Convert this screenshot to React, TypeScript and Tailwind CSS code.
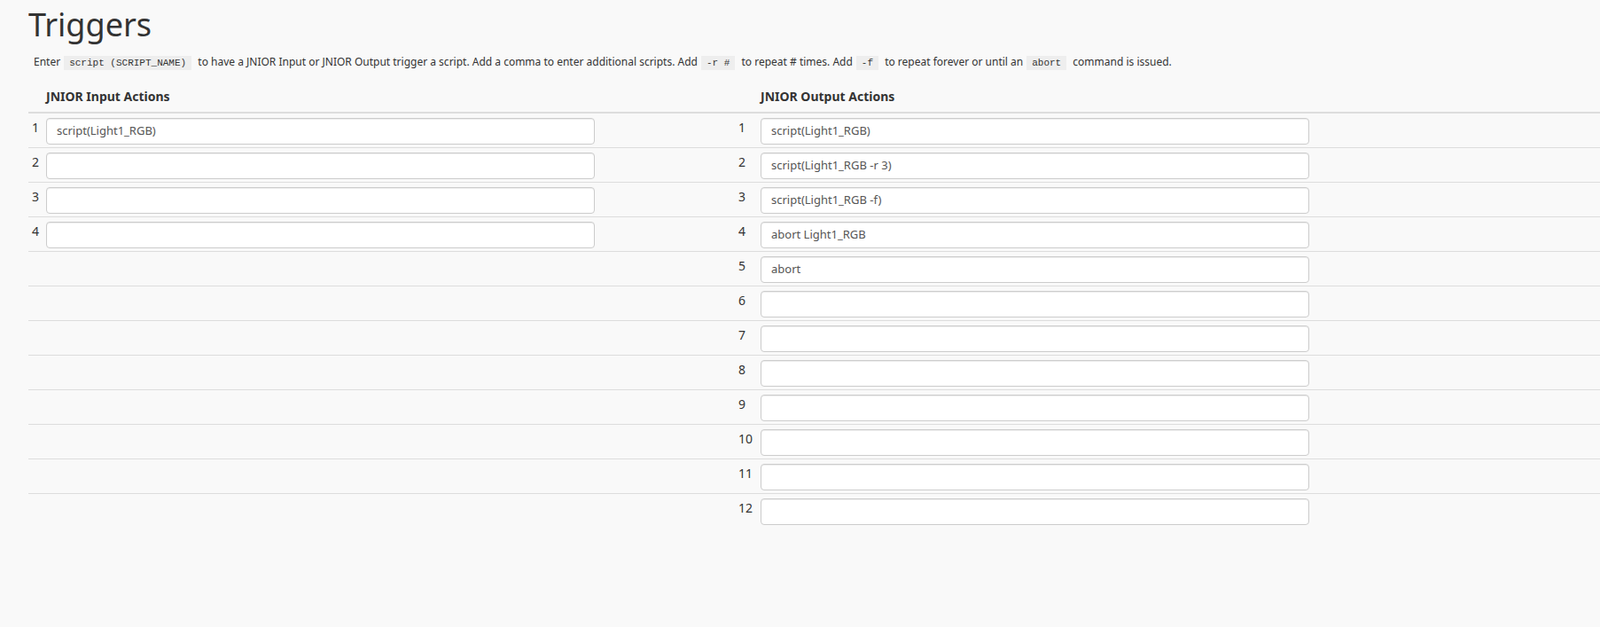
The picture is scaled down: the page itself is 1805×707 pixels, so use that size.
import React from "react";

const inputs = ["script(Light1_RGB)", "", "", ""];
const outputs = ["script(Light1_RGB)", "script(Light1_RGB -r 3)", "script(Light1_RGB -f)", "abort Light1_RGB", "abort", "", "", "", "", "", "", ""];

function Code({ children }: { children: React.ReactNode }) {
  return <code className="bg-[#eeeeee] px-[6px] py-[2px] mx-[4px] font-['Liberation_Mono'] text-[11px] text-[#333]">{children}</code>;
}

function Field({ v }: { v: string }) {
  return (
    <div className="w-[619px] h-[30px] bg-white border border-[#cccccc] rounded-[4px] shadow-[inset_0_1px_1px_rgba(0,0,0,0.075)] px-[11px] flex items-center text-[13px] text-[#555]">
      {v}
    </div>
  );
}

export default function App() {
  return (
    <div className="min-h-[707px] bg-[#f9f9f9] font-['Liberation_Sans'] text-[#333] pl-[32px]">
      <h1 className="text-[36px] leading-none pt-[10px]">Triggers</h1>
      <p className="text-[12px] mt-[15px] pl-[6px]">
        Enter<Code>script (SCRIPT_NAME)</Code> to have a JNIOR Input or JNIOR Output trigger a script. Add a comma to enter additional scripts. Add<Code>-r #</Code> to repeat # times. Add<Code>-f</Code> to repeat forever or until an<Code>abort</Code> command is issued.
      </p>
      <div className="mt-[18px]">
        <div className="flex h-[30px] border-b-2 border-[#dddddd] text-[14px] font-bold items-start">
          <div className="w-[798px] pl-[20px]">JNIOR Input Actions</div>
          <div className="pl-[28px]">JNIOR Output Actions</div>
        </div>
        {outputs.map((o, i) => (
          <div key={i} className={`flex h-[39px] ${i < outputs.length - 1 ? "border-b border-[#dddddd]" : ""}`}>
            <div className="w-[798px] flex pt-[5px]">
              {i < inputs.length && (
                <>
                  <span className="w-[20px] pl-[4px] text-[14px] text-[#333]">{i + 1}</span>
                  <Field v={inputs[i]} />
                </>
              )}
            </div>
            <div className="flex pt-[5px]">
              <span className="w-[28px] pl-[3px] text-[14px] text-[#333]">{i + 1}</span>
              <Field v={o} />
            </div>
          </div>
        ))}
      </div>
    </div>
  );
}
